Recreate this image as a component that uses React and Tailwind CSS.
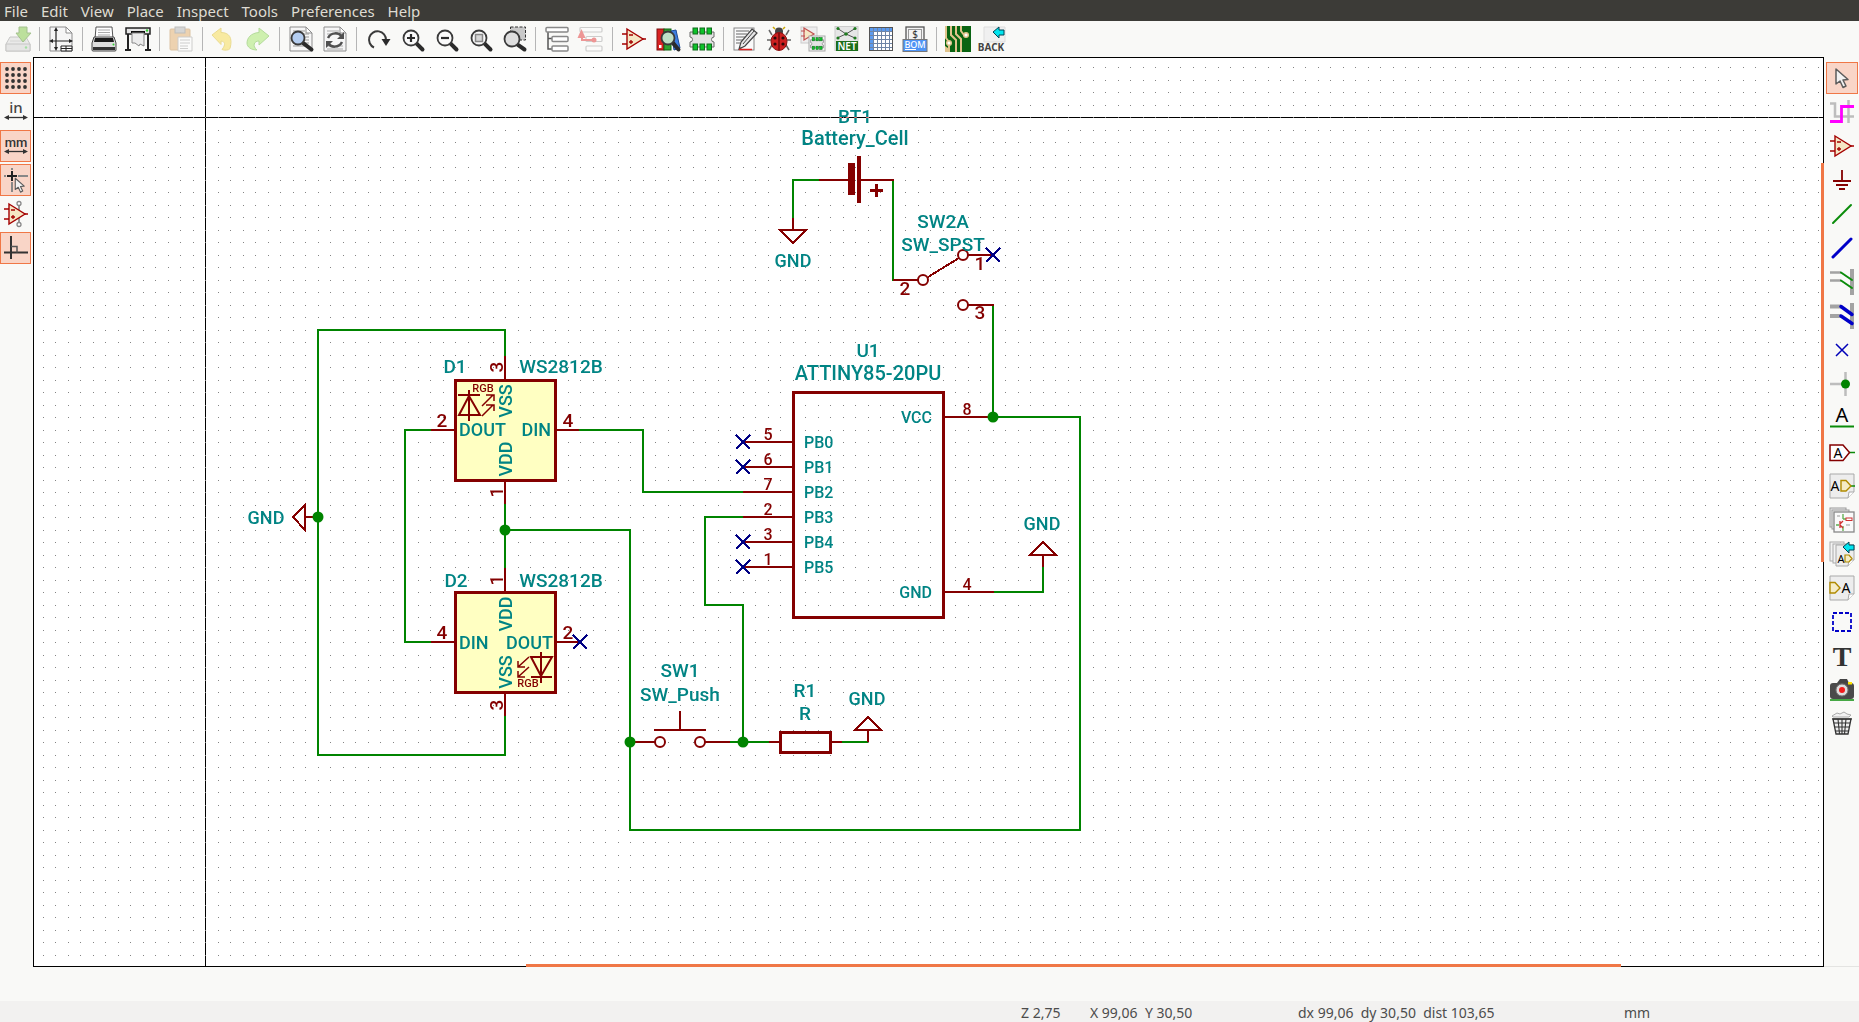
import React from "react";

const GREEN = "#008400";
const MAROON = "#840000";
const TEAL = "#008484";
const NAVY = "#000084";

/* ---------- icon building blocks (26 x 26 grid) ---------- */

function Icon({ children, faded }) {
  return (
    <svg
      width="26"
      height="26"
      viewBox="0 0 26 26"
      fill="none"
      aria-hidden="true"
      opacity={faded ? 0.45 : 1}
      className="shrink-0 overflow-visible"
    >
      {children}
    </svg>
  );
}

function Page({ x = 1, y = 1, w = 24, h = 24 }) {
  return (
    <g>
      <path d={`M${x} ${y}h${w}v${h - 6}l-6 6h-${w - 6}z`} fill="#ededed" stroke="#a9a9a9" />
      <path d={`M${x + w} ${y + h - 6}h-5l-1 6`} fill="#fff" stroke="#a9a9a9" />
    </g>
  );
}

function SheetTop() {
  return (
    <g>
      <path d="M2 1h16l6 6v18H2z" fill="#f6f6f6" stroke="#8d8d8d" />
      <path d="M18 1v6h6z" fill="#fff" stroke="#8d8d8d" />
    </g>
  );
}

function Lens({ cx = 11, cy = 11, r = 7.5, fill = "#fafafa" }) {
  return (
    <g>
      <path d={`M${cx + r * 0.75} ${cy + r * 0.75}L23.5 23.5`} stroke="#2b2b2b" strokeWidth="4" strokeLinecap="round" />
      <circle cx={cx} cy={cy} r={r} fill={fill} stroke="#3a3a3a" strokeWidth="1.8" />
    </g>
  );
}

function OpAmp() {
  return (
    <g>
      <path d="M1 8h5M1 18h5M21 13h4" stroke="#a40000" strokeWidth="1.3" />
      <path d="M6 3l16 10L6 23z" fill="#f5e6c4" stroke="#a40000" strokeWidth="1.4" />
      <path d="M8 9h4M8 16h4M10 14v4" stroke="#a40000" strokeWidth="1.3" />
    </g>
  );
}

function Chip({ x = 0, y = 0, s = 1 }) {
  return (
    <g transform={`translate(${x} ${y}) scale(${s})`}>
      <path d="M1 6h24v5a2.5 2.5 0 0 0 0 5v5H1v-5a2.5 2.5 0 0 0 0-5z" fill="#e3e3e3" stroke="#6a6a6a" />
      <g fill="#0cc22a" stroke="#116b1c">
        {[4, 11, 18].map((px) => (
          <g key={px}>
            <rect x={px} y="2" width="4.5" height="6" />
            <rect x={px} y="18" width="4.5" height="6" />
          </g>
        ))}
      </g>
    </g>
  );
}

function Pointer({ x = 0, y = 0, s = 1 }) {
  return (
    <path
      transform={`translate(${x} ${y}) scale(${s})`}
      d="M7 3v15l4-3 3 6.5 3-1.5-3-6 5-.5z"
      fill="#f2f2f2"
      stroke="#5c5c5c"
      strokeWidth="1.5"
      strokeLinejoin="round"
    />
  );
}

function Letter({ x, y, size, fill = "#000", family = "Noto Sans", weight = 400, children }) {
  return (
    <text x={x} y={y} fontSize={size} fill={fill} fontFamily={`"${family}", sans-serif`} fontWeight={weight} textAnchor="middle">
      {children}
    </text>
  );
}

const icons = {
  save: (
    <Icon faded>
      <path d="M5 11h16l4 7v7H1v-7z" fill="#d9d9d9" stroke="#8a8a8a" />
      <path d="M1 18h24v7H1z" fill="#cfcfcf" stroke="#8a8a8a" />
      <path d="M5 15h16" stroke="#aaa" />
      <circle cx="21" cy="21.5" r="1.2" fill="#3fc03f" />
      <path d="M14 1h8v6h4l-8 9-7-9h3z" fill="#73c22f" stroke="#3d7f10" />
    </Icon>
  ),
  page: (
    <Icon>
      <SheetTop />
      <path d="M8 3v20M3 15h21" stroke="#222" strokeWidth="1.2" />
      <path d="M8 1l-2 4h4zM8 25l-2-4h4zM1 15l4-2v4zM25 15l-4-2v4z" fill="#222" />
      <path d="M13 20h11v5H13zM13 22.5h11M18 20v5" stroke="#222" fill="#fff" />
    </Icon>
  ),
  print: (
    <Icon>
      <path d="M5 1h16l1 12H4z" fill="#fff" stroke="#555" />
      <path d="M7 4h12M7 6.5h12M7 9h12" stroke="#aaa" />
      <path d="M3 11h20l2 6v7q0 1-1 1H2q-1 0-1-1v-7z" fill="#ddd" stroke="#444" />
      <path d="M4 12h18l1 4H3z" fill="#1a1a1a" />
      <path d="M2 21h22v3H2z" fill="#333" />
      <circle cx="22.5" cy="18.5" r="1" fill="#2fd02f" />
    </Icon>
  ),
  plotter: (
    <Icon>
      <path d="M3 7v16M23 7v16" stroke="#222" strokeWidth="2" />
      <path d="M0 24h6M20 24h6" stroke="#222" strokeWidth="2" />
      <rect x="1" y="2" width="24" height="6" fill="#e6e6e6" stroke="#222" strokeWidth="1.5" />
      <path d="M6 6h14" stroke="#111" strokeWidth="2" />
      <path d="M7 7h12v13l-4-2-1 2-4-3H7z" fill="#ececec" stroke="#888" />
      <circle cx="22" cy="4.5" r="1.2" fill="#3c3" />
    </Icon>
  ),
  paste: (
    <Icon faded>
      <rect x="2" y="3" width="20" height="21" rx="1" fill="#e0a45c" stroke="#b8813b" />
      <rect x="7" y="1" width="10" height="6" fill="#aaa" stroke="#777" />
      <path d="M10 11h14v14H10z" fill="#fff" stroke="#999" />
      <path d="M12 14h10M12 17h10M12 20h8M12 22.5h8" stroke="#999" />
    </Icon>
  ),
  undo: (
    <Icon faded>
      <path d="M1 9l9-7v4.500c8 0 12 5 9 16-1 2-6 2-8 1 4-5 3-8-1-8.500v3.500z" fill="#f7d93a" stroke="#d6b514" />
    </Icon>
  ),
  redo: (
    <Icon faded>
      <path d="M24 10l-10-8v4.500C6 7 2 12 2 17c0 4 4 7 10 7-5-4-3-9 2-9v4z" fill="#9be65a" stroke="#5fb52a" />
    </Icon>
  ),
  find: (
    <Icon>
      <SheetTop />
      <path d="M5 5h12M5 8h16M5 11h16M5 14h16M5 17h16M5 20h12" stroke="#999" />
      <Lens cx={10} cy={12} r={6.5} fill="#b4cdf0" />
    </Icon>
  ),
  replace: (
    <Icon>
      <SheetTop />
      <path d="M5 5h12M5 8h16M5 20h16M5 23h16" stroke="#aaa" />
      <path d="M6 12c3-6 11-6 14-1M20 16c-3 6-11 6-14 1" stroke="#505050" strokeWidth="2.5" />
      <path d="M22 6v7h-7zM4 22v-7h7z" fill="#505050" />
    </Icon>
  ),
  refresh: (
    <Icon>
      <path d="M9 21.5A8.500 8.500 0 1 1 21 14" stroke="#3a3a3a" strokeWidth="2" />
      <path d="M16.5 13h9L21 20z" fill="#2b2b2b" />
    </Icon>
  ),
  zoomIn: (
    <Icon>
      <Lens cx={12} cy={12} />
      <path d="M12 8v8M8 12h8" stroke="#2b2b2b" strokeWidth="2.2" />
    </Icon>
  ),
  zoomOut: (
    <Icon>
      <Lens cx={12} cy={12} />
      <path d="M8 12h8" stroke="#2b2b2b" strokeWidth="2.2" />
    </Icon>
  ),
  zoomFit: (
    <Icon>
      <Lens cx={12} cy={12} />
      <rect x="8.5" y="8.5" width="7" height="7" fill="#d6d6d6" stroke="#888" strokeWidth="1.5" />
    </Icon>
  ),
  zoomSel: (
    <Icon>
      <rect x="9.5" y="1" width="15" height="13" fill="#c9c9c9" stroke="#333" strokeDasharray="3 1.5" />
      <Lens cx={11} cy={13} r={7.5} fill="#dedede" />
    </Icon>
  ),
  hierarchy: (
    <Icon>
      <path d="M4 6v17h5M4 12.500h5" stroke="#555" strokeWidth="1.5" />
      <g fill="#fff" stroke="#888" strokeWidth="1.5">
        <rect x="2" y="1.5" width="22" height="4.5" rx="1" />
        <rect x="8" y="10.5" width="16" height="5" rx="1" />
        <rect x="8" y="20" width="16" height="5" rx="1" />
      </g>
    </Icon>
  ),
  leave: (
    <Icon faded>
      <g fill="#fff" stroke="#999" strokeWidth="1.2">
        <rect x="2" y="1.5" width="22" height="4.5" rx="1" />
        <rect x="8" y="10.5" width="16" height="5" rx="1" />
        <rect x="8" y="20" width="16" height="5" rx="1" />
      </g>
      <path d="M16 14H4V8" stroke="#e02020" strokeWidth="2" />
      <path d="M3.500 3l4 9h-8z" fill="#e02020" />
      <circle cx="16" cy="14" r="2.5" fill="#e02020" />
    </Icon>
  ),
  opamp: <Icon><OpAmp /></Icon>,
  library: (
    <Icon>
      <rect x="2" y="3" width="7" height="21" fill="#d92222" stroke="#7c1010" />
      <rect x="9" y="3" width="7" height="21" fill="#2fa52f" stroke="#126012" />
      <path d="M16 5l5-1 4 18-6 2z" fill="#3d7ee0" stroke="#1c4b98" />
      <rect x="4" y="19" width="2.5" height="3" fill="#fff" />
      <Lens cx={13} cy={12} r={6.5} fill="#bfe0c6" />
    </Icon>
  ),
  footprint: <Icon><Chip /></Icon>,
  annotate: (
    <Icon>
      <rect x="2" y="2" width="20" height="22" fill="#fafafa" stroke="#888" />
      <path d="M4 5h13M4 8h11M4 11h9M4 14h7M4 17h4" stroke="#666" />
      <path d="M20 3l5 4-12 13-6 3 2-7z" fill="#e6e6e6" stroke="#444" strokeWidth="1.2" />
      <path d="M22 5L11 18M7 22.500l3-1" stroke="#444" />
      <path d="M7 23.500h13" stroke="#e02020" strokeWidth="1.5" />
    </Icon>
  ),
  bug: (
    <Icon>
      <path d="M6 9L3 4M20 9l3-5M5 14H1M21 14h4M6 19l-3 5M20 19l3 5" stroke="#666" strokeWidth="1.5" />
      <circle cx="13" cy="5.5" r="4" fill="#444" />
      <path d="M9 3l-2-2M17 3l2-2" stroke="#caa800" strokeWidth="1.5" />
      <ellipse cx="13" cy="15.5" rx="8" ry="9" fill="#cc1f1f" stroke="#8a0f0f" />
      <path d="M13 7v17" stroke="#400" />
      <g fill="#2a0a0a">
        <circle cx="9" cy="12" r="1.6" />
        <circle cx="17" cy="12" r="1.6" />
        <circle cx="9" cy="18" r="1.6" />
        <circle cx="17" cy="18" r="1.6" />
      </g>
    </Icon>
  ),
  cvpcb: (
    <Icon>
      <rect x="1" y="1" width="16" height="16" fill="#eee" stroke="#ccc" />
      <path d="M1 5h4M1 10h4M4 2l10 6-10 6z" fill="#f5e6c4" stroke="#c05050" strokeWidth="1.2" />
      <rect x="9" y="10" width="16" height="15" fill="#f3f3f3" stroke="#aaa" />
      <Chip x={10} y={10.5} s={0.54} />
    </Icon>
  ),
  net: (
    <Icon>
      <rect x="1" y="0.5" width="23" height="24" fill="#e6e6e6" stroke="#ccc" />
      <path d="M3 2l9 6 10-6M12 8L3 12M12 8l9 4" stroke="#555" />
      <g fill="#1f7a1f">
        <circle cx="4" cy="2.5" r="1.6" />
        <circle cx="21" cy="2.5" r="1.6" />
        <circle cx="12" cy="8" r="1.8" />
        <circle cx="4" cy="12" r="1.6" />
        <circle cx="21" cy="12" r="1.6" />
      </g>
      <rect x="2" y="15" width="22" height="10" fill="#1b6e1b" />
      <Letter x={13} y={24} size={10} fill="#fff" weight={600}>NET</Letter>
    </Icon>
  ),
  table: (
    <Icon>
      <rect x="1.5" y="1.5" width="23" height="23" fill="#fff" />
      <path d="M1.500 1.500h23v4h-23zM1.500 1.500h4v23h-4z" fill="#5b9bf0" />
      <path d="M5.500 1v24M9.500 1v24M13.500 1v24M17.500 1v24M21.500 1v24M1 5.500h24M1 9.500h24M1 13.500h24M1 17.500h24M1 21.500h24" stroke="#6d84a6" />
      <rect x="1.5" y="1.5" width="23" height="23" stroke="#555" />
    </Icon>
  ),
  bom: (
    <Icon>
      <rect x="4" y="1" width="18" height="16" fill="#f4f4f4" stroke="#555" strokeWidth="1.3" />
      <rect x="6.5" y="3.5" width="13" height="10" stroke="#999" />
      <Letter x={13} y={12} size={10} fill="#333">$</Letter>
      <rect x="1" y="13.5" width="24" height="12" fill="#4f94f5" stroke="#777" />
      <Letter x={13} y={22} size={9} fill="#fff" weight={500}>BOM</Letter>
      <path d="M3 23.500h11" stroke="#fff" />
    </Icon>
  ),
  pcb: (
    <Icon>
      <rect x="0" y="0" width="26" height="26" fill="#0a6412" />
      <path d="M1 0v12l3 4v10M6 0v9l5 5v12M11 0v8l5 5v13M16 0v5l3 4" stroke="#e0c48c" strokeWidth="2" />
      <circle cx="21" cy="9" r="2.3" fill="#fff" stroke="#e0c48c" strokeWidth="1.5" />
      <circle cx="4" cy="17" r="2.3" fill="#fff" stroke="#e0c48c" strokeWidth="1.5" />
      <path d="M0 20v6h3v-4z" fill="#e0c48c" />
    </Icon>
  ),
  back: (
    <Icon>
      <path d="M5 1h21v15H5z" fill="#f0f0f0" stroke="#ddd" />
      <path d="M14 6l6-5v3h5v5h-5v3z" fill="#00e5ef" stroke="#045" />
      <Letter x={12} y={25} size={10} fill="#444" weight={700} family="Noto Sans">BACK</Letter>
    </Icon>
  ),
  grid: (
    <Icon>
      {[4, 10, 16, 22].map((y) => [4, 10, 16, 22].map((x) => <circle key={`${x}-${y}`} cx={x} cy={y} r="1.9" fill="#333" />))}
    </Icon>
  ),
  inch: (
    <Icon>
      <Letter x={13} y={14} size={15} fill="#444" weight={500}>in</Letter>
      <path d="M3 18.500h20" stroke="#333" strokeWidth="1.3" />
      <path d="M1 18.500l5-2.500v5zM25 18.500l-5-2.500v5z" fill="#333" />
    </Icon>
  ),
  mm: (
    <Icon>
      <Letter x={13} y={14} size={13} fill="#333" weight={500} family="Roboto">mm</Letter>
      <path d="M3 18.500h20" stroke="#333" strokeWidth="1.3" />
      <path d="M1 18.500l5-2.500v5zM25 18.500l-5-2.500v5z" fill="#333" />
    </Icon>
  ),
  cursorShape: (
    <Icon>
      <path d="M1 9h2M15 9h10M9 1v2M9 15v10" stroke="#888" strokeWidth="2" />
      <path d="M4 9h10M9 4v10" stroke="#222" strokeWidth="2" />
      <Pointer x={7} y={9} s={0.75} />
    </Icon>
  ),
  hiddenPins: (
    <Icon>
      <path d="M16 4v19" stroke="#999" strokeWidth="2" />
      <OpAmp />
      <circle cx="16" cy="2.5" r="2" fill="#fff" stroke="#888" strokeWidth="1.3" />
      <circle cx="16" cy="23.5" r="2" fill="#fff" stroke="#888" strokeWidth="1.3" />
    </Icon>
  ),
  ortho: (
    <Icon>
      <path d="M8 1v23M1 17.500h24" stroke="#333" strokeWidth="2" />
      <path d="M8 11.500h6v6" stroke="#555" strokeWidth="1.5" />
    </Icon>
  ),
  select: <Icon><Pointer x={0} y={1} s={1} /></Icon>,
  highlight: (
    <Icon>
      <path d="M1 4.500h5v13h19M19.500 1v23" stroke="#bdbdbd" strokeWidth="2.5" />
      <path d="M1 22.500h11.500V7.500H25" stroke="#ff00ff" strokeWidth="2.8" />
    </Icon>
  ),
  power: (
    <Icon>
      <path d="M13 3v10M4 14h18M7 18h12M10 22h6" stroke={MAROON} strokeWidth="1.8" />
    </Icon>
  ),
  wire: <Icon><path d="M4 22L22 4" stroke="#0a8c0a" strokeWidth="2" strokeLinecap="round" /></Icon>,
  bus: <Icon><path d="M4 22L22 4" stroke="#0000c8" strokeWidth="3" strokeLinecap="round" /></Icon>,
  wireEntry: (
    <Icon>
      <path d="M23 0v26" stroke="#a3a3a3" strokeWidth="4" />
      <path d="M1 3.500h11M1 11.500h11" stroke="#a3a3a3" strokeWidth="2.5" />
      <path d="M12 3.500l11 7.500M12 11.500l11 7.500" stroke="#0a8c0a" strokeWidth="2" strokeLinecap="round" />
    </Icon>
  ),
  busEntry: (
    <Icon>
      <path d="M23 0v26" stroke="#a3a3a3" strokeWidth="4" />
      <path d="M1 3.500h11M1 13h11" stroke="#a3a3a3" strokeWidth="4" />
      <path d="M12 3.500l11 8M12 13l11 7.500" stroke="#0000c8" strokeWidth="3.5" strokeLinecap="round" />
    </Icon>
  ),
  noConnect: <Icon><path d="M7 7l12 12M19 7L7 19" stroke="#0000b8" strokeWidth="1.5" /></Icon>,
  junction: (
    <Icon>
      <path d="M16.500 1v24M1 13h16" stroke="#bdbdbd" strokeWidth="2.5" />
      <circle cx="16.5" cy="13" r="4.5" fill={GREEN} />
    </Icon>
  ),
  netLabel: (
    <Icon>
      <Letter x={13} y={17} size={20}>A</Letter>
      <path d="M1 21.500h24" stroke="#0a8c0a" strokeWidth="2" />
    </Icon>
  ),
  globalLabel: (
    <Icon>
      <path d="M20 13.500h6" stroke="#0a8c0a" strokeWidth="1.5" />
      <path d="M1 6h13l6.500 7.500-6.500 8H1z" fill="#fff" stroke={MAROON} strokeWidth="1.5" />
      <Letter x={9} y={19} size={14}>A</Letter>
    </Icon>
  ),
  hierLabel: (
    <Icon>
      <Page />
      <path d="M21 13h5" stroke="#0a8c0a" strokeWidth="1.5" />
      <path d="M12 7.500h5l5 5.500-5 5h-5z" fill="#f5ecc6" stroke="#b08a00" strokeWidth="1.4" />
      <Letter x={6} y={18} size={14}>A</Letter>
    </Icon>
  ),
  sheet: (
    <Icon>
      <rect x="1" y="1" width="16" height="19" fill="#ededed" stroke="#999" />
      <rect x="3" y="3" width="17" height="19" fill="#ededed" stroke="#999" />
      <rect x="5" y="5" width="20" height="20" fill="#fafafa" stroke="#888" strokeWidth="1.3" />
      <path d="M14 7v5M14 19v5M14 12h4M7 18h3" stroke="#5cae4c" strokeWidth="1.3" />
      <path d="M11 14v7M11 17l3-3M11 18l3 3" stroke="#d03030" strokeWidth="1.3" />
      <rect x="17" y="11" width="6" height="2.5" fill="#fff" stroke="#d03030" />
      <path d="M8 9h3M17 18h4" stroke="#999" />
    </Icon>
  ),
  importSheet: (
    <Icon>
      <rect x="1" y="1" width="14" height="19" fill="#f3f3f3" stroke="#aaa" />
      <rect x="4" y="3" width="15" height="19" fill="#f3f3f3" stroke="#aaa" />
      <Page x={7} y={4} w={18} h={21} />
      <Letter x={12} y={22} size={11}>A</Letter>
      <path d="M16 14h4l3 3.500-3 3.500h-4z" fill="#f5ecc6" stroke="#b08a00" strokeWidth="1.2" />
      <path d="M14 6l6-5v3h5v5h-5v3z" fill="#00e5ef" stroke="#045" />
    </Icon>
  ),
  sheetPin: (
    <Icon>
      <Page />
      <path d="M1 7.500h5l5 5.500-5 5H1z" fill="#f5ecc6" stroke="#b08a00" strokeWidth="1.4" />
      <Letter x={17} y={18} size={14}>A</Letter>
    </Icon>
  ),
  rect: <Icon><rect x="4" y="4" width="18" height="18" stroke="#0000c8" strokeWidth="1.8" strokeDasharray="4 2" /></Icon>,
  text: <Icon><Letter x={13} y={23} size={28} fill="#333" family="Liberation Serif" weight={700}>T</Letter></Icon>,
  camera: (
    <Icon>
      <path d="M8 6l3-4h7l2 4z" fill="#444" />
      <rect x="1" y="6" width="24" height="16" rx="3" fill="#4a4a4a" />
      <rect x="19" y="5" width="4" height="2.5" fill="#ffe600" />
      <circle cx="13" cy="13" r="6" fill="#ddd" stroke="#777" />
      <circle cx="13" cy="13" r="3" fill="#f21c1c" />
      <path d="M1 23h24" stroke="#0a8c0a" strokeWidth="1.5" />
    </Icon>
  ),
  trash: (
    <Icon>
      <path d="M3 5l5-3 3 1 4-2 3 2 4 1-2 2H4z" fill="#f2f2f2" stroke="#aaa" />
      <path d="M4 8h18l-3 15H7z" fill="#ededed" stroke="#333" strokeWidth="1.3" />
      <path d="M3 8h20M5 12h16M6 16h14M6.500 20h13M9 8l1.500 15M13 8v15M17 8l-1.500 15" stroke="#333" strokeWidth="1.1" />
    </Icon>
  ),
};

/* ---------- tool bars ---------- */

const menus = ["File", "Edit", "View", "Place", "Inspect", "Tools", "Preferences", "Help"];

const toolGroups = [
  [["save", "Save"]],
  [["page", "Page settings"]],
  [["print", "Print"], ["plotter", "Plot"]],
  [["paste", "Paste"]],
  [["undo", "Undo"], ["redo", "Redo"]],
  [["find", "Find"], ["replace", "Find and replace"]],
  [["refresh", "Refresh"], ["zoomIn", "Zoom in"], ["zoomOut", "Zoom out"], ["zoomFit", "Zoom to fit"], ["zoomSel", "Zoom to selection"]],
  [["hierarchy", "Navigate hierarchy"], ["leave", "Leave sheet"]],
  [["opamp", "Symbol editor"], ["library", "Browse symbols"], ["footprint", "Footprint editor"]],
  [["annotate", "Annotate"], ["bug", "Electrical rules check"], ["cvpcb", "Assign footprints"], ["net", "Netlist"], ["table", "Edit fields"], ["bom", "Bill of materials"]],
  [["pcb", "PCB editor"], ["back", "Back-import"]],
];

const leftTools = [
  ["grid", "Show grid", true],
  ["inch", "Inches", false],
  ["mm", "Millimetres", true],
  ["cursorShape", "Cursor shape", true],
  ["hiddenPins", "Hidden pins", false],
  ["ortho", "Orthogonal wires", true],
];

const rightTools = [
  ["select", "Select", true],
  ["highlight", "Highlight net"],
  ["opamp", "Place symbol"],
  ["power", "Place power port"],
  ["wire", "Place wire"],
  ["bus", "Place bus"],
  ["wireEntry", "Wire to bus entry"],
  ["busEntry", "Bus to bus entry"],
  ["noConnect", "No-connect flag"],
  ["junction", "Junction"],
  ["netLabel", "Net label"],
  ["globalLabel", "Global label"],
  ["hierLabel", "Hierarchical label"],
  ["sheet", "Hierarchical sheet"],
  ["importSheet", "Import sheet pin"],
  ["sheetPin", "Sheet pin"],
  ["rect", "Graphic lines"],
  ["text", "Text"],
  ["camera", "Image"],
  ["trash", "Delete"],
];

function SideButton({ icon, label, active }) {
  return (
    <button
      type="button"
      aria-label={label}
      aria-pressed={!!active}
      className={
        active
          ? "flex h-8 w-full shrink-0 items-center justify-center border border-[#f07746] bg-[#f9d5c7]"
          : "flex h-8 w-full shrink-0 items-center justify-center border border-transparent"
      }
    >
      {icons[icon]}
    </button>
  );
}

/* ---------- schematic ---------- */

function Label({ x, y, size = 19, color = TEAL, anchor = "middle", vertical, children }) {
  return (
    <text
      x={x}
      y={y}
      fontSize={size}
      fontWeight="500"
      fill={color}
      textAnchor={anchor}
      transform={vertical ? `rotate(-90 ${x} ${y})` : undefined}
    >
      {children}
    </text>
  );
}

function Cross({ x, y }) {
  return <path d={`M${x - 7} ${y - 7}l14 14M${x + 7} ${y - 7}l-14 14`} stroke={NAVY} strokeWidth="2" />;
}

function Schematic() {
  const leftPins = [
    [442, "5", "PB0", true],
    [467, "6", "PB1", true],
    [492, "7", "PB2", false],
    [517, "2", "PB3", false],
    [542, "3", "PB4", true],
    [567, "1", "PB5", true],
  ];
  return (
    <svg className="block h-full w-full" role="img" aria-label="Schematic sheet" fontFamily='Roboto, "Noto Sans", sans-serif'>
      <defs>
        <pattern id="grid-dots" width="25" height="25" patternUnits="userSpaceOnUse" x="43" y="67">
          <path d="M0 0h1v1h-1zM12 0h1v1h-1zM0 13h1v1h-1zM12 13h1v1h-1z" fill="#848484" />
        </pattern>
      </defs>
      <g transform="translate(-34 -58)" shapeRendering="crispEdges">
        <rect x="34" y="58" width="100%" height="100%" fill="url(#grid-dots)" />

        <g stroke={GREEN} strokeWidth="2" fill="none" strokeLinecap="square">
          <path d="M818 180H793V218M893 181V280M993 306V417H1080V830H630V530H505" />
          <path d="M505 356V330H318V755H505V716M505 504V568M431 430H405V642H431" />
          <path d="M579 430H643V492H743M743 517H705V605H743V742" />
          <path d="M994 592H1043V567M730 742H769M842 742H867" />
        </g>

        <g stroke={MAROON} strokeWidth="2" fill="none">
          <path d="M819 180H848M861 180H894M793 218V230M780 230H806L793 243Z" />
          <path d="M893 280H918M928 277L959 258M968 255H993M968 305H994" />
          <path d="M945 417H993M945 592H994M1043 567V555M1030 555H1056L1043 542Z" />
          <path d="M305 517H318M305 505V530L293 517Z" />
          <path d="M505 356V380M505 482V504M431 430H455M557 430H579" />
          <path d="M505 568V592M505 694V716M431 642H455M557 642H580" />
          <path d="M630 742H656M705 742H730M654 730H706M680 711V730" />
          <path d="M769 742H780M832 742H842M868 742V730M855 730H881L868 717Z" />
          <g shapeRendering="auto">
            <circle cx="963" cy="255" r="5" />
            <circle cx="923" cy="280" r="5" />
            <circle cx="963" cy="305" r="5" />
            <circle cx="660" cy="742" r="5" />
            <circle cx="700" cy="742" r="5" />
          </g>
          <path d="M870 190H883M876 184V197" strokeWidth="3" />
        </g>
        <path d="M848 163h7v32h-7zM857 156h4v47h-4z" fill={MAROON} />

        <g stroke={MAROON} strokeWidth="3">
          <rect x="793.5" y="392.5" width="150" height="225" fill="none" />
          <rect x="780.5" y="732.5" width="50" height="20" fill="none" />
          <rect x="455.5" y="380.5" width="100" height="100" fill="#ffffc2" />
          <rect x="455.5" y="592.5" width="100" height="100" fill="#ffffc2" />
        </g>

        <g stroke={MAROON} strokeWidth="2" fill="none" shapeRendering="auto">
          <path d="M469 390V421M458 395H480M469 396L459 415H480Z" />
          <path d="M482 406L493 395M486 395H494V401M482 416L493 405M486 405H494V411" strokeWidth="1.5" />
          <path d="M541 652V683M531 677H552M541 676L531 657H552Z" />
          <path d="M529 657L518 667M518 661V667H525M529 667L518 677M518 671V677H525" strokeWidth="1.5" />
        </g>

        <g shapeRendering="auto" fill={GREEN}>
          {[[318, 517], [505, 530], [630, 742], [743, 742], [993, 417]].map(([x, y]) => (
            <circle key={`${x}-${y}`} cx={x} cy={y} r="5.5" />
          ))}
        </g>

        {leftPins.map(([y, num, name, open]) => (
          <g key={name}>
            <path d={`M743 ${y}H793`} stroke={MAROON} strokeWidth="2" />
            {open && <Cross x={743} y={y} />}
            <Label x={768} y={y - 2} size={16} color={MAROON}>{num}</Label>
            <Label x={804} y={y + 6} size={16} anchor="start">{name}</Label>
          </g>
        ))}
        <Cross x={993} y={255} />
        <Cross x={580} y={642} />

        <Label x={855} y={123}>BT1</Label>
        <Label x={855} y={145} size={20}>Battery_Cell</Label>
        <Label x={793} y={267} size={18}>GND</Label>
        <Label x={943} y={228}>SW2A</Label>
        <Label x={943} y={251}>SW_SPST</Label>
        <Label x={905} y={295} color={MAROON}>2</Label>
        <Label x={980} y={270} color={MAROON}>1</Label>
        <Label x={980} y={319} color={MAROON}>3</Label>

        <Label x={868} y={357}>U1</Label>
        <Label x={868} y={380} size={20}>ATTINY85-20PU</Label>
        <Label x={932} y={423} size={16} anchor="end">VCC</Label>
        <Label x={932} y={598} size={16} anchor="end">GND</Label>
        <Label x={967} y={415} size={16} color={MAROON}>8</Label>
        <Label x={967} y={590} size={16} color={MAROON}>4</Label>
        <Label x={1042} y={530} size={18}>GND</Label>

        <Label x={266} y={524} size={18}>GND</Label>
        <Label x={455} y={373}>D1</Label>
        <Label x={561} y={373}>WS2812B</Label>
        <Label x={442} y={427} color={MAROON}>2</Label>
        <Label x={568} y={427} color={MAROON}>4</Label>
        <Label x={503} y={367} color={MAROON} vertical>3</Label>
        <Label x={503} y={492} color={MAROON} vertical>1</Label>
        <Label x={459} y={436} size={18} anchor="start">DOUT</Label>
        <Label x={551} y={436} size={18} anchor="end">DIN</Label>
        <Label x={512} y={401} size={18} vertical>VSS</Label>
        <Label x={512} y={459} size={18} vertical>VDD</Label>
        <Label x={483} y={392} size={11} color={MAROON}>RGB</Label>

        <Label x={456} y={587}>D2</Label>
        <Label x={561} y={587}>WS2812B</Label>
        <Label x={442} y={639} color={MAROON}>4</Label>
        <Label x={568} y={639} color={MAROON}>2</Label>
        <Label x={503} y={580} color={MAROON} vertical>1</Label>
        <Label x={503} y={705} color={MAROON} vertical>3</Label>
        <Label x={459} y={649} size={18} anchor="start">DIN</Label>
        <Label x={553} y={649} size={18} anchor="end">DOUT</Label>
        <Label x={512} y={614} size={18} vertical>VDD</Label>
        <Label x={512} y={672} size={18} vertical>VSS</Label>
        <Label x={528} y={687} size={11} color={MAROON}>RGB</Label>

        <Label x={680} y={677}>SW1</Label>
        <Label x={680} y={701}>SW_Push</Label>
        <Label x={805} y={697}>R1</Label>
        <Label x={805} y={720}>R</Label>
        <Label x={867} y={705} size={18}>GND</Label>

        <g fill="#fff" className="mix-blend-difference">
          <rect x="34" y="117" width="100%" height="1" />
          <rect x="205" y="58" width="1" height="100%" />
        </g>
      </g>
    </svg>
  );
}

/* ---------- window ---------- */

export default function App() {
  return (
    <div className="flex h-screen flex-col overflow-hidden bg-[#f9f9f7] font-['Noto_Sans',sans-serif] text-sm text-[#4c4c4c]">
      <nav aria-label="Main menu" className="flex h-[21px] shrink-0 items-center gap-[13px] bg-[#3c3b37] px-1 text-[15px] text-[#dfdbd2]">
        {menus.map((m) => (
          <button key={m} type="button" className="leading-5">{m}</button>
        ))}
      </nav>

      <div role="toolbar" aria-label="Main toolbar" className="flex h-9 shrink-0 items-center pl-px">
        {toolGroups.map((group, i) => (
          <React.Fragment key={group[0][0]}>
            {i > 0 && (
              <span className="flex w-[9px] justify-center">
                <span className="h-6 w-px bg-[#b5b5b5]" />
              </span>
            )}
            {group.map(([icon, label]) => (
              <button key={icon} type="button" aria-label={label} className="flex h-8 w-[34px] items-center justify-center">
                {icons[icon]}
              </button>
            ))}
          </React.Fragment>
        ))}
      </div>

      <main className="flex min-h-0 flex-1">
        <aside aria-label="Options" className="flex w-[33px] shrink-0 flex-col gap-0.5 pr-0.5 pt-[5px]">
          {leftTools.map(([icon, label, active]) => (
            <SideButton key={icon} icon={icon} label={label} active={active} />
          ))}
        </aside>

        <section className="relative isolate min-w-0 flex-1 border border-black bg-white">
          <Schematic />
          <div className="absolute -right-px top-[11.6%] h-[43.9%] w-[3px] bg-[#f07746]" />
          <div className="absolute -bottom-px left-[27.5%] h-[3px] w-[61.2%] bg-[#f07746]" />
        </section>

        <aside aria-label="Drawing tools" className="flex w-[35px] shrink-0 flex-col gap-0.5 border-b border-[#e4e4e2] pl-0.5 pr-px pt-[5px]">
          {rightTools.map(([icon, label, active]) => (
            <SideButton key={icon} icon={icon} label={label} active={active} />
          ))}
        </aside>
      </main>

      <div className="h-[34px] shrink-0" />

      <footer className="grid h-[21px] shrink-0 grid-cols-[1021fr_69fr_208fr_326fr_235fr] items-center whitespace-nowrap bg-[#f2f1f0] pt-0.5">
        <span />
        <span>Z 2,75</span>
        <span>X 99,06&nbsp; Y 30,50</span>
        <span>dx 99,06&nbsp; dy 30,50&nbsp; dist 103,65</span>
        <span>mm</span>
      </footer>
    </div>
  );
}
